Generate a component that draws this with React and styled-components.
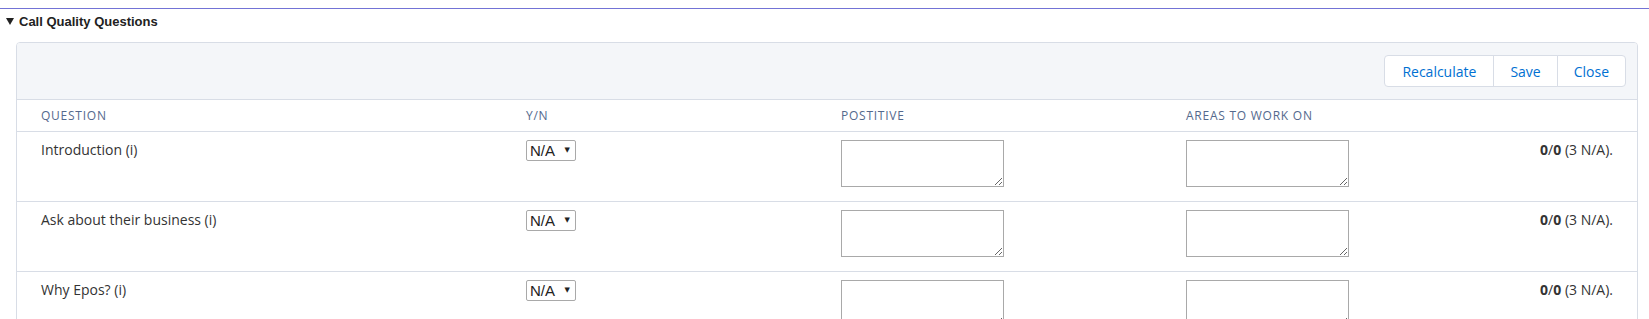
import styled, { createGlobalStyle } from 'styled-components'

const GlobalStyle = createGlobalStyle`
  html, body {
    margin: 0;
    padding: 0;
    background: #fff;
  }
  body {
    font-family: 'Open Sans', Arial, sans-serif;
    color: #333;
  }
`

const Page = styled.div`
  padding-top: 8px;
`

const Section = styled.section`
  border-top: 1px solid #7373d6;
`

const SectionTitle = styled.h3`
  display: flex;
  align-items: center;
  gap: 5px;
  margin: 4px 0 12px 6px;
  font-family: 'Liberation Sans', Arial, sans-serif;
  font-size: 13px;
  font-weight: bold;
  line-height: 17px;
  color: #222;
`

// small disclosure triangle
const Caret = styled.span`
  width: 0;
  height: 0;
  border-left: 4.5px solid transparent;
  border-right: 4.5px solid transparent;
  border-top: 7px solid #222;
`

const Card = styled.div`
  margin: 0 11px 0 16px;
  border: 1px solid #d8dde6;
  border-radius: 4px;
  background: #fff;
  overflow: hidden;
`

const CardHeader = styled.div`
  display: flex;
  justify-content: flex-end;
  padding: 12px 11px 12px 12px;
  background: #f4f6f9;
  border-bottom: 1px solid #d8dde6;
`

const ButtonGroup = styled.div`
  display: flex;
`

const GroupButton = styled.button`
  height: 32px;
  padding: 0 16px;
  margin-left: -1px;
  background: #fff;
  border: 1px solid #d8dde6;
  border-radius: 0;
  color: #0070d2;
  font-family: 'Open Sans', Arial, sans-serif;
  font-size: 14px;
  cursor: pointer;

  &:first-child {
    margin-left: 0;
    padding: 0 17px;
    border-radius: 4px 0 0 4px;
  }
  &:last-child {
    border-radius: 0 4px 4px 0;
  }
`

const Row = styled.div`
  display: grid;
  grid-template-columns: 485px 315px 345px 1fr auto;
  padding: ${(p) => (p.head ? '0 24px' : '8px 24px 14px')};
  height: ${(p) => (p.head ? '31px' : 'auto')};
  align-items: ${(p) => (p.head ? 'center' : 'start')};
  border-bottom: 1px solid #d8dde6;
  font-size: 14px;
  line-height: 20px;
`

const HeadCell = styled.div`
  font-size: 12px;
  letter-spacing: 0.75px;
  text-transform: uppercase;
  color: #54698d;
`

const Question = styled.div`
  color: #333;
`

const SelectWrap = styled.span`
  position: relative;
  display: inline-block;
  width: 50px;
  height: 21px;
`

const Select = styled.select`
  appearance: none;
  width: 100%;
  height: 100%;
  margin: 0;
  padding: 0 0 0 3px;
  border: 1px solid #a9a9a9;
  border-radius: 2px;
  background: #fff;
  font-family: 'Liberation Sans', Arial, sans-serif;
  font-size: 15px;
  color: #222;
`

const SelectArrow = styled.span`
  position: absolute;
  right: 6px;
  top: 6px;
  font-family: 'DejaVu Sans', sans-serif;
  font-size: 7px;
  line-height: 9px;
  color: #222;
  pointer-events: none;
`

const Notes = styled.textarea`
  display: block;
  box-sizing: border-box;
  width: 163px;
  height: 47px;
  margin: 0;
  border: 1px solid #a9a9a9;
  border-radius: 0;
  font-family: 'Open Sans', Arial, sans-serif;
`

const Score = styled.div`
  text-align: right;
  color: #333;
  white-space: nowrap;

  b {
    font-weight: 700;
  }
`

const questions = ['Introduction (i)', 'Ask about their business (i)', 'Why Epos? (i)']

export default function App() {
  return (
    <>
      <GlobalStyle />
      <Page>
        <Section>
          <SectionTitle>
            <Caret />
            Call Quality Questions
          </SectionTitle>
          <Card>
            <CardHeader>
              <ButtonGroup>
                <GroupButton>Recalculate</GroupButton>
                <GroupButton>Save</GroupButton>
                <GroupButton>Close</GroupButton>
              </ButtonGroup>
            </CardHeader>
            <Row head>
              <HeadCell>Question</HeadCell>
              <HeadCell>Y/N</HeadCell>
              <HeadCell>Postitive</HeadCell>
              <HeadCell>Areas to work on</HeadCell>
              <HeadCell />
            </Row>
            {questions.map((q) => (
              <Row key={q}>
                <Question>{q}</Question>
                <div>
                  <SelectWrap>
                    <Select defaultValue='na'>
                      <option value='na'>N/A</option>
                      <option value='y'>Y</option>
                      <option value='n'>N</option>
                    </Select>
                    <SelectArrow>▼</SelectArrow>
                  </SelectWrap>
                </div>
                <div>
                  <Notes />
                </div>
                <div>
                  <Notes />
                </div>
                <Score>
                  <b>0</b>/<b>0</b> (3 N/A).
                </Score>
              </Row>
            ))}
          </Card>
        </Section>
      </Page>
    </>
  )
}
